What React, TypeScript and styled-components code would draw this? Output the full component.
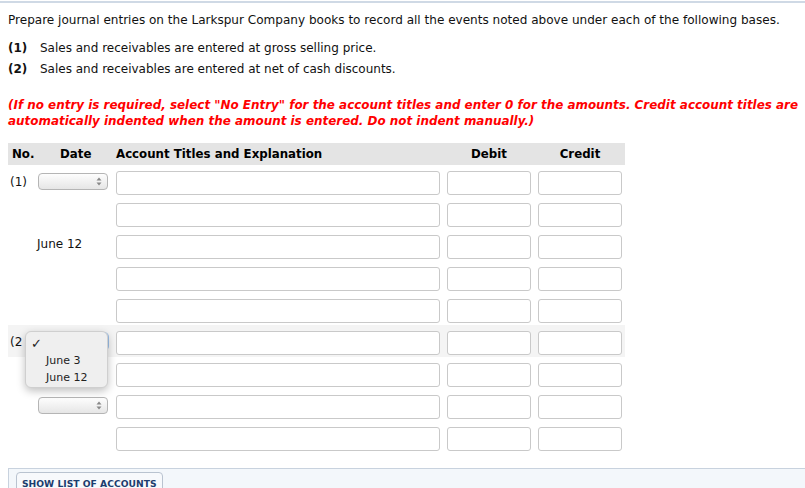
import styled, { createGlobalStyle } from 'styled-components'

const GlobalStyle = createGlobalStyle`
  html, body {
    margin: 0;
    padding: 0;
    background: #fff;
  }
  body {
    font-family: "DejaVu Sans", Verdana, sans-serif;
    color: #111;
  }
`

const Page = styled.div`
  margin-top: 1px;
  border-top: 2px solid #cfd9e5;
  padding: 9px 0 0 8px;
  width: 805px;
  box-sizing: border-box;
`

const Intro = styled.p`
  margin: 0;
  font-size: 12.05px;
  line-height: 16px;
  white-space: nowrap;
`

const Bases = styled.ol`
  list-style: none;
  margin: 10px 0 0 0;
  padding: 0;
`

const Basis = styled.li`
  display: flex;
  font-size: 12px;
  line-height: 21px;
`

const BasisNo = styled.span`
  font-weight: bold;
  width: 32px;
`

const Warning = styled.p`
  margin: 17px 0 0 0;
  width: 797px;
  color: #ff0000;
  font-weight: bold;
  font-style: italic;
  font-size: 11.95px;
  line-height: 16px;
`

const Journal = styled.div`
  margin-top: 14px;
  width: 617px;
`

const columns = '21px 71px 324px 84px 84px'

const Row = styled.div<{ $highlight?: boolean }>`
  display: grid;
  grid-template-columns: ${columns};
  column-gap: 7px;
  padding: 6px 3px 2px 2px;
  height: 32px;
  box-sizing: border-box;
  align-items: center;
  background: ${p => (p.$highlight ? '#f4f4f4' : 'transparent')};
  position: relative;
`

const HeaderRow = styled.div`
  display: grid;
  grid-template-columns: ${columns};
  column-gap: 7px;
  padding: 0 3px 0 2px;
  height: 22px;
  align-items: center;
  background: #e4e4e4;
  font-weight: bold;
  font-size: 11.8px;
  color: #000;
`

const HeadCell = styled.div<{ $center?: boolean; $shift?: number }>`
  text-align: ${p => (p.$center ? 'center' : 'left')};
  margin-left: ${p => p.$shift ?? 0}px;
  white-space: nowrap;
`

const NoCell = styled.div`
  font-size: 12px;
  white-space: nowrap;
  align-self: start;
  padding-top: 4px;
`

const DateCell = styled.div`
  display: flex;
  align-items: flex-start;
  height: 24px;
  padding-top: 2px;
  box-sizing: border-box;
`

const DateText = styled.span`
  font-size: 12px;
  margin-left: -1px;
`

const Select = styled.div<{ $focused?: boolean }>`
  width: 70px;
  height: 17px;
  box-sizing: border-box;
  border: 1px solid ${p => (p.$focused ? '#6ea0db' : '#b5b5b5')};
  box-shadow: ${p => (p.$focused ? '0 0 0 1px #9cc0ea' : 'none')};
  border-radius: 4px;
  background: linear-gradient(#fdfdfd, #e6e6e6);
  display: flex;
  justify-content: flex-end;
  align-items: center;
  padding-right: 5px;
`

const Arrows = styled.svg`
  display: block;
`

const Field = styled.div`
  height: 24px;
  box-sizing: border-box;
  border: 1px solid #c9c9c9;
  border-radius: 3px;
  background: #fff;
`

const Popup = styled.div`
  position: absolute;
  left: 17px;
  top: 6px;
  width: 83px;
  height: 57px;
  box-sizing: border-box;
  background: #efefef;
  border: 1px solid #cfcfcf;
  border-radius: 6px;
  box-shadow: 0 3px 8px rgba(0, 0, 0, 0.25);
  padding: 3px 0 0 0;
  font-size: 11px;
  z-index: 5;
`

const Option = styled.div<{ $check?: boolean }>`
  height: 17px;
  line-height: 17px;
  padding-left: ${p => (p.$check ? '5px' : '20px')};
  font-size: ${p => (p.$check ? '13px' : '11px')};
  color: #222;
`

const Footer = styled.div`
  margin-top: 15px;
  border-top: 1px solid #c8d2de;
  border-left: 1px solid #c8d2de;
  background: #f3f7fb;
  height: 40px;
  padding: 3px 0 0 7px;
  box-sizing: border-box;
  width: 797px;
`

const AccountsButton = styled.button`
  font-family: "DejaVu Sans", Verdana, sans-serif;
  font-weight: bold;
  font-size: 9.2px;
  color: #1c3d6e;
  background: #f7f9fc;
  border: 1px solid #b9c3d0;
  border-radius: 4px;
  padding: 5px 5px;
`

const SelectBox = ({ focused }: { focused?: boolean }) => (
  <Select $focused={focused}>
    <Arrows width="6" height="9" viewBox="0 0 6 9">
      <path d="M3 0.5 L5.5 3.5 H0.5 Z" fill="#888" />
      <path d="M3 8.5 L5.5 5.5 H0.5 Z" fill="#888" />
    </Arrows>
  </Select>
)

type Line = { no?: string; date?: 'select' | 'focus' | string; highlight?: boolean }

const lines: Line[] = [
  { no: '(1)', date: 'select' },
  {},
  { date: 'June 12' },
  {},
  {},
  { no: '(2', date: 'focus', highlight: true },
  {},
  { date: 'select' },
  {},
]

const App = () => {
  return (
    <>
      <GlobalStyle />
      <Page>
        <Intro>
          Prepare journal entries on the Larkspur Company books to record all the events noted above under each of the following bases.
        </Intro>
        <Bases>
          <Basis>
            <BasisNo>(1)</BasisNo>
            Sales and receivables are entered at gross selling price.
          </Basis>
          <Basis>
            <BasisNo>(2)</BasisNo>
            Sales and receivables are entered at net of cash discounts.
          </Basis>
        </Bases>
        <Warning>
          (If no entry is required, select "No Entry" for the account titles and enter 0 for the amounts. Credit account titles are automatically indented when the amount is entered. Do not indent manually.)
        </Warning>

        <Journal>
          <HeaderRow>
            <HeadCell $shift={2}>No.</HeadCell>
            <HeadCell $shift={22}>Date</HeadCell>
            <HeadCell>Account Titles and Explanation</HeadCell>
            <HeadCell $center>Debit</HeadCell>
            <HeadCell $center>Credit</HeadCell>
          </HeaderRow>
          {lines.map((line, i) => (
            <Row key={i} $highlight={line.highlight}>
              <NoCell>{line.no}</NoCell>
              <DateCell>
                {line.date === 'select' && <SelectBox />}
                {line.date === 'focus' && <SelectBox focused />}
                {line.date && line.date !== 'select' && line.date !== 'focus' && (
                  <DateText>{line.date}</DateText>
                )}
              </DateCell>
              <Field />
              <Field />
              <Field />
              {line.date === 'focus' && (
                <Popup>
                  <Option $check>✓</Option>
                  <Option>June 3</Option>
                  <Option>June 12</Option>
                </Popup>
              )}
            </Row>
          ))}
        </Journal>

        <Footer>
          <AccountsButton>SHOW LIST OF ACCOUNTS</AccountsButton>
        </Footer>
      </Page>
    </>
  )
}

export default App
